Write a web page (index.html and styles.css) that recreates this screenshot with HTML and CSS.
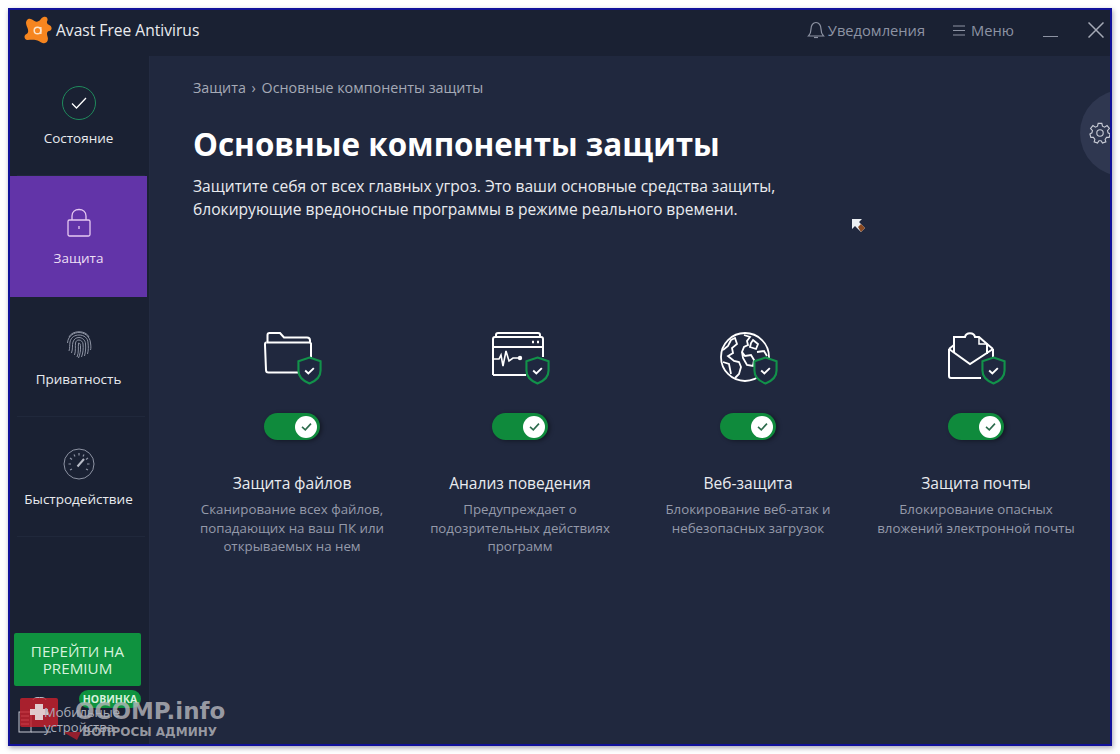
FILE: index.html
```html
<!DOCTYPE html>
<html>
  <head>
    <title>Avast Free Antivirus</title>
    <link rel="stylesheet" href="styles.css">
  </head>
  <body>
    <svg class="sprite" width="0" height="0">
      <symbol id="shield" viewBox="0 0 26 30">
        <path d="M13 1.500 L24.500 5.500 V15 C24.500 21.500 19.500 26 13 28.500 C6.500 26 1.500 21.500 1.500 15 V5.500 Z" fill="#1f2840" stroke="#12924a" stroke-width="2.200"/>
        <path d="M8.500 15 L11.800 18 L17.500 12.500" fill="none" stroke="#fff" stroke-width="2"/>
      </symbol>
      <symbol id="tick" viewBox="0 0 16 16">
        <path d="M2.500 8.500 L6.500 12 L13.500 4.500" fill="none" stroke="#2c6b4c" stroke-width="2"/>
      </symbol>
    </svg>

    <div class="window">
      <header class="titlebar">
        <div class="brand">
          <svg class="logo" viewBox="0 0 28 28" width="28" height="28">
            <path d="M20 .8 C23 0 24.500 3 23 5.500 C22.500 7.500 24 8.500 26 9.500 C28.500 11 28 14.500 25 15 C23 15.500 22.500 17.500 23.500 20.500 C25 24.500 22.500 28.500 18.500 27 C16 26 14.500 24.500 11.500 24 C8.500 23.500 6 24 3.500 24 C0 23.500 -.5 19.500 2.500 18 C4.500 17 4.500 14.500 3.500 12 C2.500 9.500 1 6.500 3 4 C5 1.500 8 3 10.500 5 C12.500 6.500 15 5.500 16.500 3.500 C17.500 2 18.500 1.200 20 .8 Z" fill="#f6851f"/>
            <circle cx="13.500" cy="14.500" r="3.300" fill="none" stroke="#fbe3c8" stroke-width="1.500"/>
            <path d="M16.800 11 V18" stroke="#fbe3c8" stroke-width="1.500"/>
          </svg>
          <span>Avast Free Antivirus</span>
        </div>
        <div class="top-actions">
          <span class="top-link bell-link">
            <svg viewBox="0 0 18 18" width="18" height="18" fill="none" stroke="#8d93a3" stroke-width="1.200"><path d="M1.500 15 C3.500 13 4 11 4 8 C4 4.500 6 1.500 9 1.500 C12 1.500 14 4.500 14 8 C14 11 14.500 13 16.500 15 Z"/><path d="M7 16.500 H11"/></svg>
            Уведомления
          </span>
          <span class="top-link menu-link">
            <svg viewBox="0 0 12 11" width="12" height="11" stroke="#8d93a3" stroke-width="1.200"><path d="M0 1 H12 M0 5.500 H12 M0 10 H12"/></svg>
            Меню
          </span>
          <span class="minimize"></span>
          <svg class="close" viewBox="0 0 16 16" width="16" height="16" stroke="#a5aab6" stroke-width="1.500"><path d="M.5 .5 L15.500 15.500 M15.500 .5 L.5 15.500"/></svg>
        </div>
      </header>

      <div class="content">
        <nav class="sidebar">
          <a class="nav-item">
            <span class="nav-icon">
              <span class="status-ring">
                <svg viewBox="0 0 16 14" width="16" height="14" fill="none" stroke="#fff" stroke-width="1.300"><path d="M1 7.500 L5.500 12 L15 2"/></svg>
              </span>
            </span>
            Состояние
          </a>
          <a class="nav-item active">
            <span class="nav-icon">
              <svg viewBox="0 0 24 30" width="24" height="30" fill="none" stroke="#e6c9f2" stroke-width="1.300"><rect x="1" y="12" width="22" height="16" rx="1.500"/><path d="M5 12 V8 C5 4 8 1.500 12 1.500 C16 1.500 19 4 19 8 V12"/><path d="M12 18 V21"/></svg>
            </span>
            Защита
          </a>
          <a class="nav-item">
            <span class="nav-icon">
              <svg viewBox="0 0 26 30" width="26" height="30" fill="none" stroke="#8d93a3" stroke-width="1"><path d="M3 8 C6 1 20 1 23 8"/><path d="M1.500 14 C2 6 9 3.500 13 3.500 C18 3.500 24 7 24.500 14 C25 17 25 19 24.500 21"/><path d="M3 22 C4 19 3.500 16 4 13 C5 8 9 6 13 6 C18 6 22 9 22 14 C22.500 18 22.500 21 21.500 25"/><path d="M5.500 24 C7 20 6 16 7 13 C8 10 10 8.500 13 8.500 C16 8.500 19.500 11 19.500 15 C20 19 19.500 23 18.500 27"/><path d="M8.500 26 C10 22 9 17 9.500 14 C10 12 11 11 13 11 C15 11 17 13 17 15 C17.500 20 17 24 15.500 28"/><path d="M11 28 C13 24 12 18 12.500 14 C14.500 14 14.500 16 14.500 18 C14.800 22 14 25 12.500 29"/></svg>
            </span>
            Приватность
          </a>
          <a class="nav-item">
            <span class="nav-icon">
              <svg viewBox="0 0 32 32" width="32" height="32" fill="none" stroke="#8d93a3" stroke-width="1"><circle cx="16" cy="16" r="15"/><path d="M7 22 L9 21 M5.500 16 H8 M7 10 L9 11.500 M11 6.500 L12 8.500 M16 5 V7.500 M21 6.500 L20 8.500 M25 10 L23 11.500 M26.500 16 H24 M25 22 L23 21" stroke-width="1.200"/><path d="M14.500 18.500 L21 11" stroke="#b8bcc7" stroke-width="2"/></svg>
            </span>
            Быстродействие
          </a>
          <div class="sidebar-bottom">
            <a class="premium">ПЕРЕЙТИ НА PREMIUM</a>
            <div class="mobile">
              <span class="badge">НОВИНКА</span>
              <svg class="mobile-icon" viewBox="0 0 34 40" width="34" height="40" fill="none" stroke="#c4c8d2" stroke-width="1"><path d="M15 3 C15 -.5 28 -.5 28 3"/><rect x="1" y="15" width="12" height="20"/><path d="M3 19 H11 M3 23 H11 M3 27 H11"/><path d="M13 35 H33"/></svg>
              <span class="mobile-label">Мобильные устройства</span>
            </div>
          </div>
        </nav>

        <main class="main">
          <div class="breadcrumb">Защита <span class="sep">›</span> Основные компоненты защиты</div>
          <h1>Основные компоненты защиты</h1>
          <p class="lead">Защитите себя от всех главных угроз. Это ваши основные средства защиты,<br>блокирующие вредоносные программы в режиме реального времени.</p>

          <section class="cards">
            <div class="card">
              <div class="card-icon">
                <svg viewBox="0 0 48 42" width="48" height="42" fill="none" stroke="#fff" stroke-width="2"><path d="M3.500 10.500 V3 Q3.500 1 5.500 1 H16 L20 5.500 H43 Q46 5.500 46 8.500 V11"/><path d="M2.500 10.500 H45 Q47.500 10.500 47 13 V26"/><path d="M2.500 10.500 Q.8 10.500 1 13 L2 38 Q2 40.500 4.500 40.500 H35"/></svg>
                <svg class="shield"><use href="#shield"/></svg>
              </div>
              <span class="toggle"><span class="knob"><svg viewBox="0 0 16 16" width="13" height="13"><use href="#tick"/></svg></span></span>
              <h3>Защита файлов</h3>
              <p>Сканирование всех файлов, попадающих на ваш ПК или открываемых на нем</p>
            </div>
            <div class="card">
              <div class="card-icon">
                <svg viewBox="0 0 52 44" width="52" height="44" fill="none" stroke="#fff" stroke-width="2"><path d="M4 5 V3 C4 2 5 1 6 1 H46 C47 1 48 2 48 3 V5"/><path d="M1 43 V7 C1 6 2 5 3 5 H49 C50 5 51 6 51 7 V25"/><path d="M1 15 H51"/><path d="M1 43 H34"/><path d="M1 27 H7 L9 23 L11 34 L14 19 L17 29 L21 26 H28" stroke-width="1.600"/><circle cx="28" cy="26" r="1.200" fill="#fff"/><path d="M40 10 H42 M45 10 H47" stroke-width="2.500"/></svg>
                <svg class="shield"><use href="#shield"/></svg>
              </div>
              <span class="toggle"><span class="knob"><svg viewBox="0 0 16 16" width="13" height="13"><use href="#tick"/></svg></span></span>
              <h3>Анализ поведения</h3>
              <p>Предупреждает о подозрительных действиях программ</p>
            </div>
            <div class="card">
              <div class="card-icon">
                <svg viewBox="0 0 50 50" width="50" height="50" fill="none" stroke="#fff" stroke-width="1.800"><circle cx="25" cy="25" r="24"/><path d="M3 18 L8 14 L11 8 L15 6 L17 12 L12 16 L13 21 L8 24 L14 29 L19 30 L21 35 L19 42 L15 46 M11 42 L9 32 L3 30"/><path d="M24 3 L30 5 L27 9 L28 13 L24 15 L22 20 L25 24 L31 23 L34 28 L33 34 L27 33 L23 26 L22 20"/><path d="M33 8 L38 12 L36 17 L30 15 L31 11 Z"/><path d="M37 20 L44 19 L47 24"/></svg>
                <svg class="shield"><use href="#shield"/></svg>
              </div>
              <span class="toggle"><span class="knob"><svg viewBox="0 0 16 16" width="13" height="13"><use href="#tick"/></svg></span></span>
              <h3>Веб-защита</h3>
              <p>Блокирование веб-атак и небезопасных загрузок</p>
            </div>
            <div class="card">
              <div class="card-icon">
                <svg viewBox="0 0 46 47" width="46" height="47" fill="none" stroke="#fff" stroke-width="2"><path d="M1 17 V44 Q1 46 3 46 H33"/><path d="M45 17 V26"/><path d="M1 17 L6 13 M45 17 L39 12"/><path d="M6 21 V5 H17 C18 0 26 0 27 5 H31 L39 12 V22"/><path d="M1 17 L22 32 L45 17"/><path d="M31 5 V12 H39" stroke-width="1.500"/></svg>
                <svg class="shield"><use href="#shield"/></svg>
              </div>
              <span class="toggle"><span class="knob"><svg viewBox="0 0 16 16" width="13" height="13"><use href="#tick"/></svg></span></span>
              <h3>Защита почты</h3>
              <p>Блокирование опасных вложений электронной почты</p>
            </div>
          </section>
        </main>
      </div>

      <div class="gear-tab">
        <svg viewBox="0 0 24 24" width="22" height="22" fill="none" stroke="#c9ccd6" stroke-width="1.200"><circle cx="12" cy="12" r="3.500"/><path d="M10 1.500 H14 L14.700 4.600 L17 5.600 L19.700 3.900 L22.300 7 L20.200 9.400 L20.800 11.800 L23 13 L22 16.800 L19.200 16.800 L17.600 18.900 L18.400 21.700 L14.700 23 L13.200 20.500 H10.800 L9.300 23 L5.600 21.700 L6.400 18.900 L4.800 16.800 L2 16.800 L1 13 L3.200 11.800 L3.800 9.400 L1.700 7 L4.300 3.900 L7 5.600 L9.300 4.600 Z"/></svg>
      </div>

      <svg class="cursor" viewBox="0 0 14 14" width="14" height="14"><path d="M0 0 H10 L7 3 L13 9 L9 13 L3 7 L0 10 Z" fill="#eceff2"/><path d="M6 8 L9 5 L13 9 L9 13 Z" fill="#8a4a22"/></svg>
    </div>

    <div class="watermark">
      <svg class="mark-box" viewBox="0 0 62 42" width="62" height="42"><rect x="1" y="0" width="38" height="29" rx="2" fill="#c8202c" fill-opacity="0.82"/><path d="M16 6 H24 V11 H29 V17 H24 V22 H16 V17 H11 V11 H16 Z" fill="#e9e9e9" fill-opacity="0.85"/><path d="M44 34 H62 L58 42 Z" fill="#c8202c" fill-opacity="0.7"/></svg>
      <div class="mark-text">
        <div class="mark-name">OCOMP.info</div>
        <div class="mark-sub">ВОПРОСЫ АДМИНУ</div>
      </div>
    </div>
  </body>
</html>
```

FILE: styles.css
```css
* { box-sizing: border-box; }

html, body { height: 100%; }
body { margin: 0; padding: 8px; background: #fff; font-family: "Open Sans", "Noto Sans", sans-serif; color: #fff; overflow: hidden; }

.sprite { position: absolute; }

.window { position: relative; height: 738px; border: 2px solid #12129a; display: flex; flex-direction: column; overflow: hidden; box-shadow: 1px 2px 5px rgba(0, 0, 40, 0.35); }

.titlebar { height: 46px; flex-shrink: 0; background: #1a2133; display: flex; align-items: center; justify-content: space-between; padding: 0 6px 6px 14px; }
.brand { display: flex; align-items: center; gap: 4px; font-size: 15.6px; color: #e9ebef; }
.top-actions { display: flex; align-items: center; font-size: 14.7px; color: #8d93a3; }
.top-link { display: flex; align-items: center; }
.bell-link { gap: 3px; margin-right: 28px; }
.menu-link { gap: 6px; margin-right: 29px; }
.minimize { width: 15px; height: 1px; background: #8d93a3; margin: 12px 30px 0 0; }

.content { flex: 1; display: flex; min-height: 0; }

.sidebar { width: 139px; flex-shrink: 0; background: #1a2133; display: flex; flex-direction: column; }
.nav-item { height: 120px; padding: 31px 0 0 0; display: flex; flex-direction: column; align-items: center; gap: 10px; font-size: 13.5px; line-height: 18px; color: #e9ebef; margin-right: 2px; background: linear-gradient(#20283b, #20283b) no-repeat 7px 100% / 128px 1px; }
.nav-item.active { height: 121px; background: #6234a8; color: #ecdff5; }
.nav-icon { height: 32px; display: flex; align-items: center; justify-content: center; }
.status-ring { width: 34px; height: 34px; border: 1.500px solid #1f8a5c; border-radius: 50%; display: flex; align-items: center; justify-content: center; flex-shrink: 0; }

.sidebar-bottom { margin-top: auto; padding: 0 8px 0 4px; }
.premium { display: block; height: 53px; background: #0f923f; border-radius: 2px; color: #d6f2dd; font-size: 15.2px; line-height: 17px; text-align: center; padding: 10px 10px 0; }
.mobile { position: relative; height: 58px; }
.badge { position: absolute; left: 65px; top: 4px; width: 62px; height: 18px; border-radius: 9px; background: #0f923f; color: #d6f2dd; font-size: 10.5px; font-weight: 700; text-align: center; line-height: 19px; }
.mobile-icon { position: absolute; left: 4px; top: 11px; }
.mobile-label { position: absolute; z-index: 2; left: 30px; top: 19px; font-size: 13px; line-height: 15px; color: #a8acb8; width: 85px; }

.main { flex: 1; background: #20283e; padding: 22px 0 0 43px; border-left: 1px solid #232b41; }
.breadcrumb { font-size: 14.3px; line-height: 20px; color: #a5aab6; }
.sep { margin: 0 2px; }
h1 { margin: 26px 0 0; font-size: 31.4px; line-height: 40px; font-weight: 700; color: #fff; }
.lead { margin: 11px 0 0; font-size: 15.6px; line-height: 23px; color: #e9ebef; }

.cards { display: grid; grid-template-columns: repeat(4, 228px); margin: 109px 0 0 -15px; }
.card { display: flex; flex-direction: column; align-items: center; text-align: center; padding: 0 12px; }
.card-icon { position: relative; height: 58px; width: 59px; display: flex; align-items: flex-start; padding: 2px 0 0 1px; }
.card-icon .shield { position: absolute; right: 0; bottom: 3px; width: 25px; height: 29px; }

.toggle { width: 56px; height: 27px; margin-top: 25px; border-radius: 14px; background: #0f8a3c; display: flex; justify-content: flex-end; align-items: center; padding-right: 3px; box-shadow: 2px 1px 4px rgba(0, 0, 0, 0.4); }
.knob { width: 22px; height: 22px; border-radius: 50%; background: #fff; display: flex; align-items: center; justify-content: center; }

.card h3 { margin: 33px 0 0; font-size: 15.6px; line-height: 20px; font-weight: 400; color: #e9ebef; }
.card p { margin: 7px 0 0; font-size: 13.3px; line-height: 18.500px; color: #959aaa; }

.gear-tab { position: absolute; right: -56px; top: 80px; width: 86px; height: 86px; border-radius: 50%; background: #2f3750; padding: 32px 0 0 9px; }

.cursor { position: absolute; left: 842px; top: 209px; }

.watermark { position: absolute; left: 19px; top: 698px; display: flex; }
.mark-box { margin-right: -6px; }
.mark-text { font-family: "DejaVu Sans", sans-serif; font-weight: 700; color: rgba(185, 185, 190, 0.78); }
.mark-name { font-size: 23px; line-height: 26px; }
.mark-sub { font-size: 12px; line-height: 14px; margin: 1px 0 0 7px; }
```
